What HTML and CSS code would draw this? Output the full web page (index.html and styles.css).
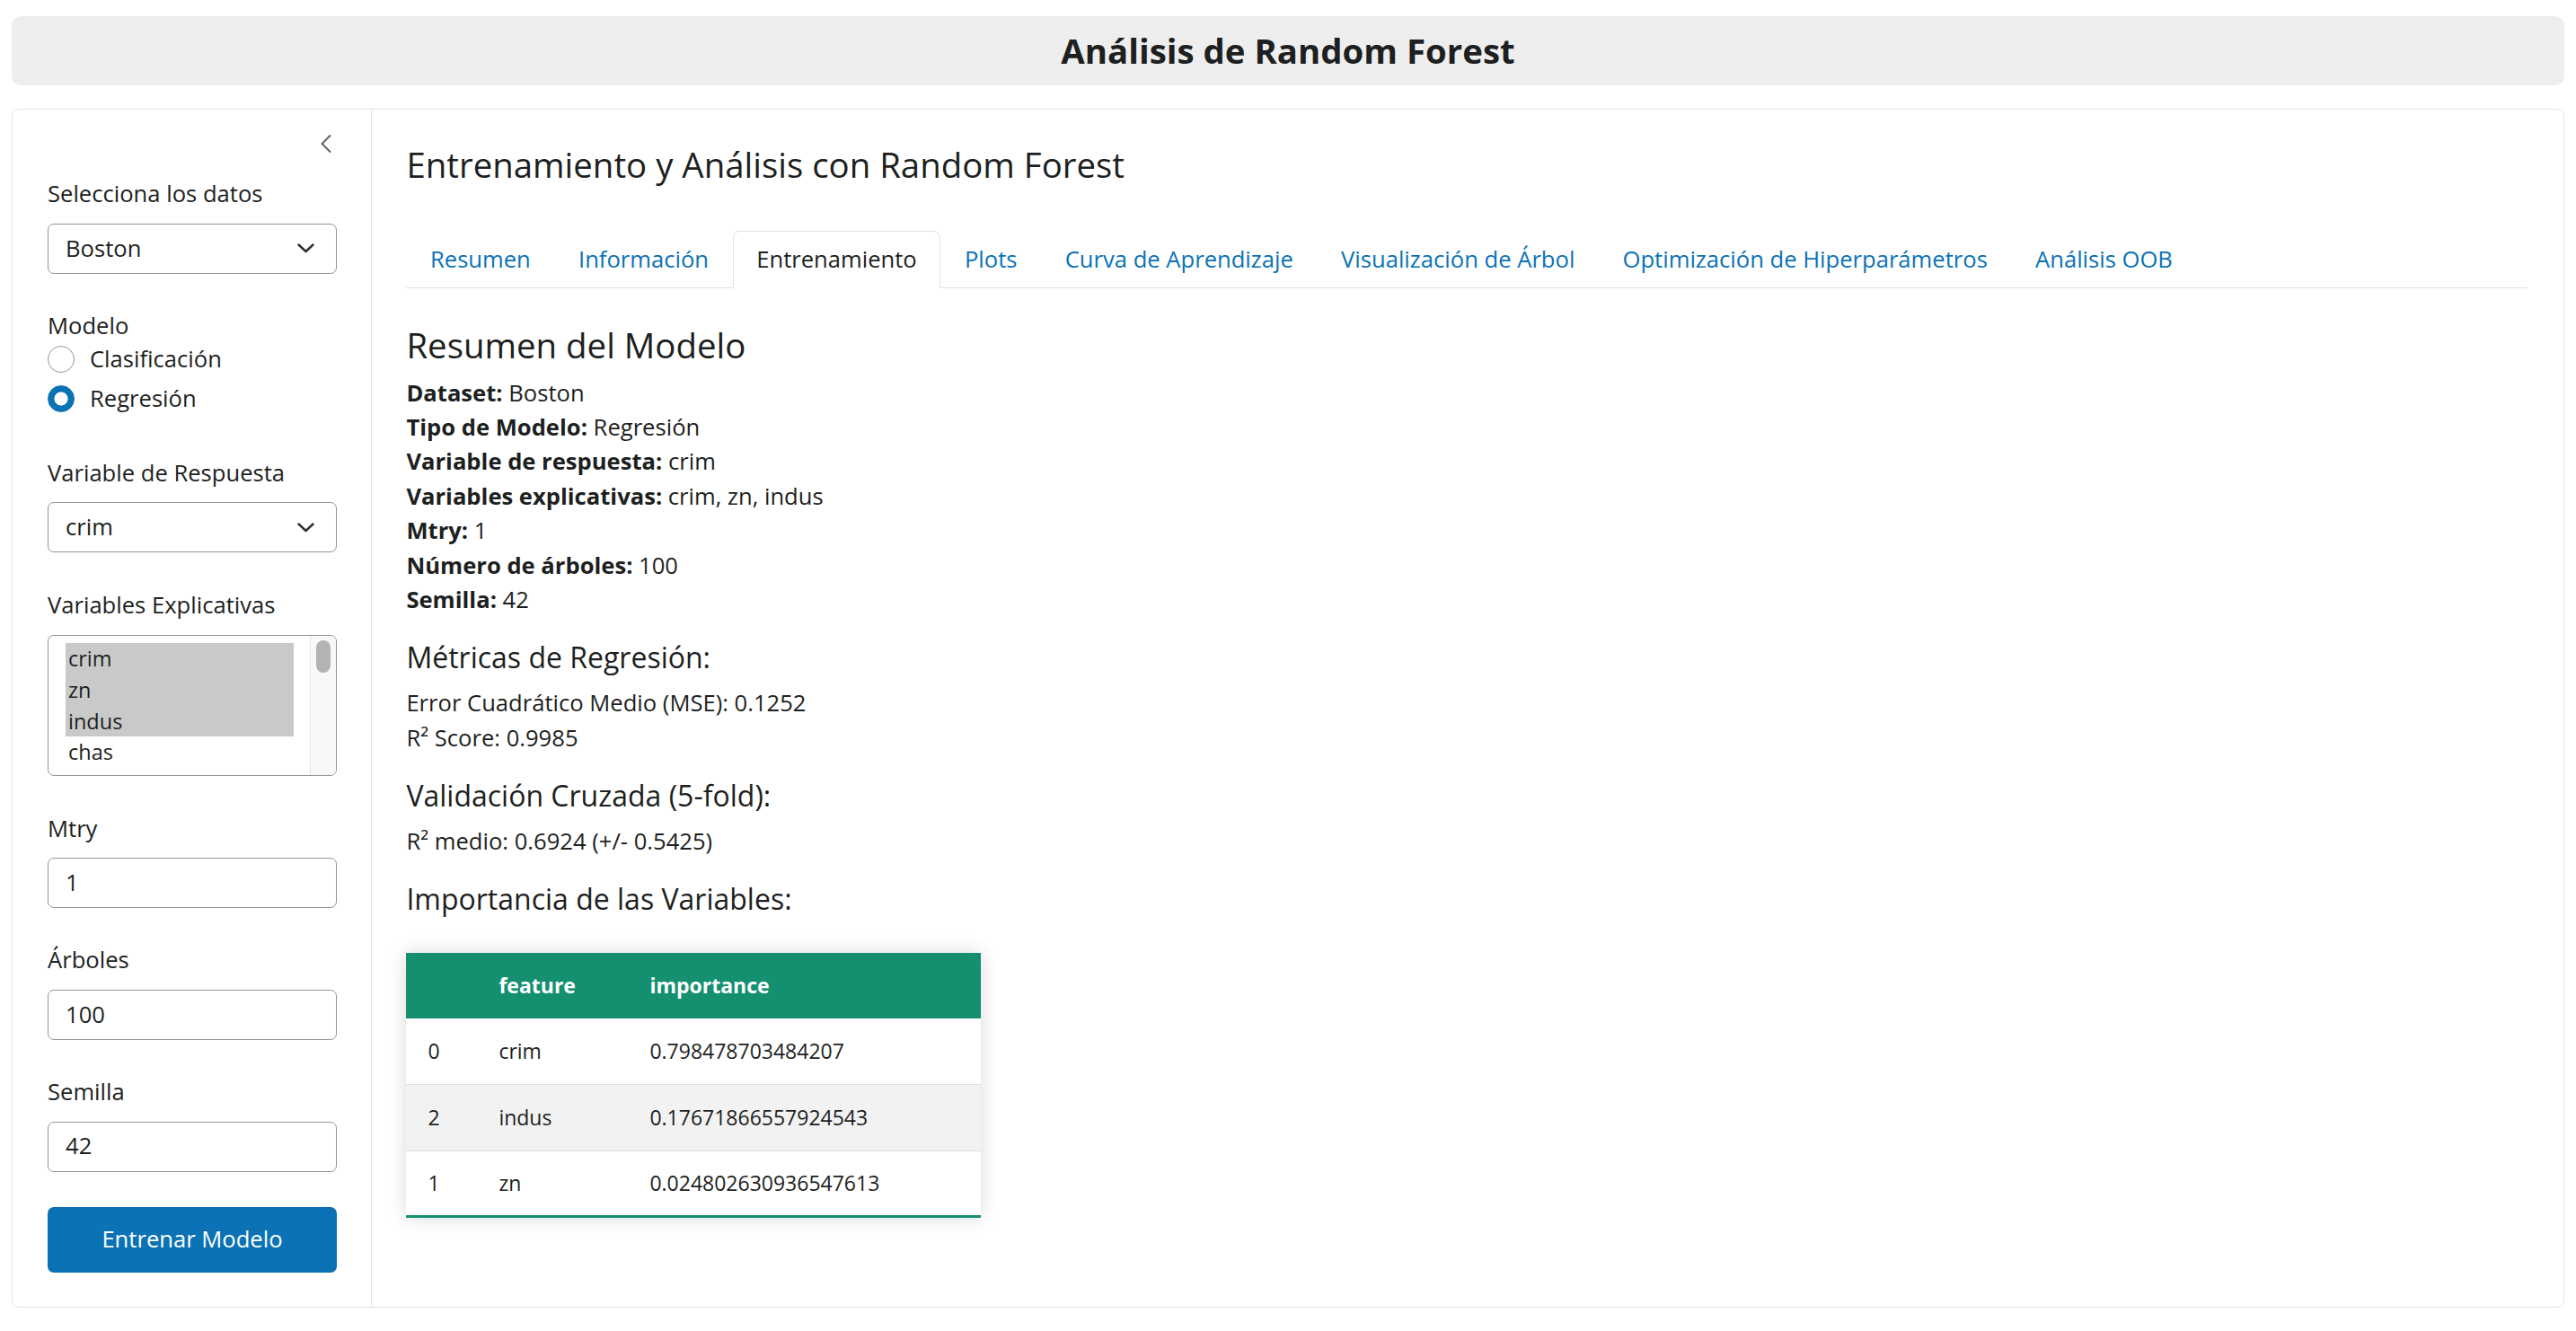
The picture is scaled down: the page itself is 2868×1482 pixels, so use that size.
FILE: index.html
```html
<!DOCTYPE html>
<html lang="es">
<head>
<meta charset="utf-8">
<title>Análisis de Random Forest</title>
<link rel="stylesheet" href="styles.css">
</head>
<body>
<div class="page">
  <header class="titlebar"><h1>Análisis de Random Forest</h1></header>
  <div class="layout">
    <aside class="sidebar">
      <div class="collapse-row">
        <svg class="collapse-icon" width="14" height="22" viewBox="0 0 14 22"><path d="M12 1.5 2.5 11 12 20.5" fill="none" stroke="#5a5a5a" stroke-width="1.8"/></svg>
      </div>
      <div class="field">
        <span class="field-label">Selecciona los datos</span>
        <div class="control select">Boston<svg class="chev" width="19" height="11" viewBox="0 0 19 11"><path d="M1.5 1.5 9.5 9 17.5 1.5" fill="none" stroke="#2b2f33" stroke-width="2.4" stroke-linecap="round" stroke-linejoin="round"/></svg></div>
      </div>
      <div class="field field-radio">
        <span class="field-label">Modelo</span>
        <div class="radio-list">
          <div class="radio-row"><span class="radio"></span><span>Clasificación</span></div>
          <div class="radio-row"><span class="radio checked"></span><span>Regresión</span></div>
        </div>
      </div>
      <div class="field">
        <span class="field-label">Variable de Respuesta</span>
        <div class="control select">crim<svg class="chev" width="19" height="11" viewBox="0 0 19 11"><path d="M1.5 1.5 9.5 9 17.5 1.5" fill="none" stroke="#2b2f33" stroke-width="2.4" stroke-linecap="round" stroke-linejoin="round"/></svg></div>
      </div>
      <div class="field">
        <span class="field-label label-multi">Variables Explicativas</span>
        <div class="multi">
          <div class="options">
            <div class="opt sel">crim</div>
            <div class="opt sel">zn</div>
            <div class="opt sel">indus</div>
            <div class="opt">chas</div>
          </div>
          <div class="scrolltrack"><div class="thumb"></div></div>
        </div>
      </div>
      <div class="field">
        <span class="field-label">Mtry</span>
        <div class="control">1</div>
      </div>
      <div class="field">
        <span class="field-label">Árboles</span>
        <div class="control">100</div>
      </div>
      <div class="field">
        <span class="field-label">Semilla</span>
        <div class="control">42</div>
      </div>
      <div class="btn">Entrenar Modelo</div>
    </aside>
    <main class="main">
      <h2 class="page-title">Entrenamiento y Análisis con Random Forest</h2>
      <ul class="tabs">
        <li class="tab">Resumen</li>
        <li class="tab">Información</li>
        <li class="tab active">Entrenamiento</li>
        <li class="tab">Plots</li>
        <li class="tab">Curva de Aprendizaje</li>
        <li class="tab">Visualización de Árbol</li>
        <li class="tab">Optimización de Hiperparámetros</li>
        <li class="tab">Análisis OOB</li>
      </ul>
      <div class="tab-content">
        <h3 class="section">Resumen del Modelo</h3>
        <p>
          <strong>Dataset:</strong> Boston<br>
          <strong>Tipo de Modelo:</strong> Regresión<br>
          <strong>Variable de respuesta:</strong> crim<br>
          <strong>Variables explicativas:</strong> crim, zn, indus<br>
          <strong>Mtry:</strong> 1<br>
          <strong>Número de árboles:</strong> 100<br>
          <strong>Semilla:</strong> 42
        </p>
        <h4 class="sub">Métricas de Regresión:</h4>
        <p>Error Cuadrático Medio (MSE): 0.1252<br>R² Score: 0.9985</p>
        <h4 class="sub">Validación Cruzada (5-fold):</h4>
        <p>R² medio: 0.6924 (+/- 0.5425)</p>
        <h4 class="sub">Importancia de las Variables:</h4>
        <table class="styled-table">
          <thead>
            <tr><th class="c1"></th><th class="c2">feature</th><th class="c3">importance</th></tr>
          </thead>
          <tbody>
            <tr><td>0</td><td>crim</td><td>0.798478703484207</td></tr>
            <tr><td>2</td><td>indus</td><td>0.17671866557924543</td></tr>
            <tr><td>1</td><td>zn</td><td>0.024802630936547613</td></tr>
          </tbody>
        </table>
      </div>
    </main>
  </div>
</div>
</body>
</html>
```
FILE: styles.css
```css
* { box-sizing: border-box; }
html, body { margin: 0; padding: 0; background: #ffffff; }
body {
  font-family: "Open Sans", "Noto Sans", sans-serif;
  font-size: 25.6px;
  line-height: 1.5;
  color: #1d1f21;
}
.page {
  height: 1482px;
  padding: 18px 13px 26px;
  display: flex;
  flex-direction: column;
  gap: 26px;
}
.titlebar {
  flex: none;
  height: 77px;
  background: #eeeeee;
  border-radius: 10px;
  display: flex;
  align-items: center;
  justify-content: center;
}
.titlebar h1 {
  margin: 0;
  font-size: 38.4px;
  font-weight: 700;
  line-height: 1.2;
}
.layout {
  flex: 1;
  display: flex;
  border: 1px solid #e3e3e3;
  border-radius: 8px;
  overflow: hidden;
  background: #ffffff;
}
.sidebar {
  flex: none;
  width: 400px;
  border-right: 1px solid #e3e3e3;
  padding: 0 38px 38px 39px;
  display: flex;
  flex-direction: column;
}
.collapse-row {
  height: 76px;
  display: flex;
  justify-content: flex-end;
  align-items: flex-start;
  padding-top: 27px;
  padding-right: 5px;
}
.field { margin-bottom: 39.4px; }
.field-label {
  display: block;
  line-height: 38.4px;
  margin-bottom: 13px;
}
.label-multi { margin-bottom: 14px; }
.control {
  height: 56px;
  border: 1px solid #8f959b;
  border-radius: 7px;
  padding: 0 19px;
  display: flex;
  align-items: center;
  justify-content: space-between;
  background: #ffffff;
}
.chev { margin-right: 5px; }
.field-radio { margin-bottom: 42px; }
.field-radio .field-label { margin-bottom: 0; }
.radio-list { margin-top: -4.5px; }
.radio-row {
  height: 44px;
  display: flex;
  align-items: center;
  gap: 17px;
}
.radio {
  width: 30px;
  height: 30px;
  border-radius: 50%;
  border: 1px solid #8f959b;
  background: #ffffff;
  display: inline-block;
}
.radio.checked {
  border-color: #0b72b5;
  background: radial-gradient(circle, #ffffff 0 7.3px, #0b72b5 7.8px);
}
.multi {
  height: 157px;
  border: 1px solid #8f959b;
  border-radius: 7px;
  display: flex;
  overflow: hidden;
}
.options {
  flex: 1;
  padding: 8px 18px 0 19px;
  font-size: 23.5px;
}
.opt {
  height: 34.7px;
  line-height: 34.7px;
  padding-left: 3px;
}
.opt.sel { background: #c9c9c9; }
.scrolltrack {
  flex: none;
  width: 29px;
  background: #f8f8f8;
  border-left: 1px solid #e6e6e6;
  padding: 5px 0 0 6px;
}
.thumb {
  width: 16px;
  height: 36px;
  border-radius: 8px;
  background: #b3b3b3;
}
.btn {
  height: 74px;
  background: #0b72b5;
  color: #ffffff;
  border-radius: 7px;
  display: flex;
  align-items: center;
  justify-content: center;
}
.main {
  flex: 1;
  padding: 38.4px 40px 38px 38.4px;
}
.page-title {
  margin: 0 0 50.6px;
  font-size: 38.4px;
  font-weight: 400;
  line-height: 1.2;
}
.tabs {
  list-style: none;
  margin: 0;
  padding: 0;
  display: flex;
  border-bottom: 1px solid #dee2e6;
}
.tab {
  padding: 11.8px 25.6px;
  line-height: 38.4px;
  border: 1px solid transparent;
  border-top-left-radius: 7px;
  border-top-right-radius: 7px;
  margin-bottom: -1px;
  color: #0b72b5;
}
.tab.active {
  color: #1d1f21;
  background: #ffffff;
  border-color: #dee2e6 #dee2e6 #ffffff;
}
.tab-content { padding-top: 40px; }
.section {
  margin: 0 0 11.5px;
  font-size: 38.4px;
  font-weight: 400;
  line-height: 1.2;
}
.tab-content p { margin: 0 0 25.6px; }
.tab-content strong { font-weight: 700; }
.sub {
  margin: 0 0 12.8px;
  font-size: 32px;
  font-weight: 400;
  line-height: 1.2;
}
.styled-table {
  border-collapse: collapse;
  width: 640px;
  font-size: 23px;
  margin-top: 41px;
  box-shadow: 0 0 20px rgba(0, 0, 0, 0.15);
}
.styled-table th,
.styled-table td {
  padding: 0 24px;
  height: 73.6px;
  text-align: left;
}
.styled-table thead tr {
  background: #148f70;
  color: #ffffff;
}
.styled-table th { font-weight: 700; height: 73px; }
.styled-table .c1 { width: 79px; }
.styled-table .c2 { width: 168px; }
.styled-table tbody tr { border-bottom: 1px solid #dddddd; }
.styled-table tbody tr:nth-of-type(even) { background: #f2f2f2; }
.styled-table tbody tr:last-of-type { border-bottom: 3px solid #148f70; }
```
